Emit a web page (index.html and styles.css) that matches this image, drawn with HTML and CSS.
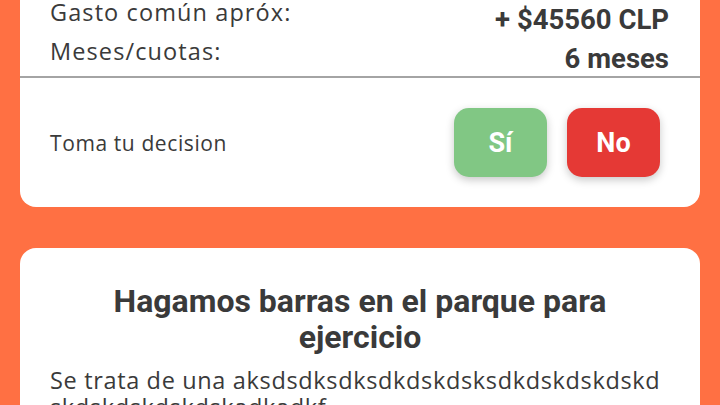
FILE: index.html
```html
<!DOCTYPE html>
<html lang="es">
<head>
<meta charset="utf-8">
<link rel="stylesheet" href="styles.css">
</head>
<body>
<main class="page">
  <section class="card card-summary">
    <div class="rows">
      <div class="row">
        <span class="label">Gasto común apróx:</span>
        <span class="value">+ $45560 CLP</span>
      </div>
      <div class="row">
        <span class="label">Meses/cuotas:</span>
        <span class="value">6 meses</span>
      </div>
    </div>
    <div class="decision">
      <span class="decision-label">Toma tu decision</span>
      <div class="buttons">
        <button class="btn btn-yes">Sí</button>
        <button class="btn btn-no">No</button>
      </div>
    </div>
  </section>
  <section class="card card-project">
    <h2 class="title">Hagamos barras en el parque para ejercicio</h2>
    <p class="desc">Se trata de una aksdsdksdksdkdskdsksdkdskdskdskd skdskdskdskdskadkadkf</p>
  </section>
</main>
</body>
</html>
```
FILE: styles.css
```css
html, body {
  margin: 0;
  padding: 0;
  background: #FF7043;
  overflow: hidden;
}
.page {
  padding: 0 20px;
  display: flex;
  flex-direction: column;
  gap: 41px;
  margin-top: -40px;
}
.card {
  background: #fff;
  border-radius: 16px;
}
.card-summary {
  padding-top: 32px;
}
.rows {
  padding: 0 31px 6px 30px;
  border-bottom: 2px solid #a4a4a4;
}
.row {
  display: flex;
  justify-content: space-between;
  align-items: flex-start;
  height: 39px;
}
.label {
  margin-top: 1px;
  font-family: "Open Sans", "Noto Sans", sans-serif;
  font-size: 23.5px;
  letter-spacing: 1.1px;
  line-height: 39px;
  color: #3a3a3a;
}
.value {
  margin-top: 8px;
  font-family: Roboto, sans-serif;
  font-weight: 700;
  font-size: 27.5px;
  line-height: 39px;
  color: #3a3a3a;
}
.decision {
  display: flex;
  justify-content: space-between;
  align-items: center;
  padding: 30px 40px 30px 30px;
}
.decision-label {
  font-family: "Open Sans", "Noto Sans", sans-serif;
  font-size: 21px;
  letter-spacing: 0.6px;
  color: #3a3a3a;
}
.buttons {
  display: flex;
  gap: 20px;
}
.btn {
  width: 93px;
  height: 69px;
  border: none;
  border-radius: 15px;
  font-family: Roboto, sans-serif;
  font-weight: 700;
  font-size: 27px;
  color: #fff;
  box-shadow: 0 3px 8px rgba(0,0,0,0.22);
}
.btn-yes { background: #81C784; }
.btn-no { background: #E53935; }
.card-project {
  padding: 35px 30px 20px 30px;
}
.title {
  margin: 0;
  text-align: center;
  font-family: Roboto, sans-serif;
  font-weight: 700;
  font-size: 32px;
  line-height: 36px;
  color: #3a3a3a;
  padding: 0 20px;
}
.desc {
  margin: 12px 0 0;
  font-family: "Open Sans", "Noto Sans", sans-serif;
  font-size: 23.5px;
  letter-spacing: 0.65px;
  line-height: 27px;
  color: #3a3a3a;
}
```
